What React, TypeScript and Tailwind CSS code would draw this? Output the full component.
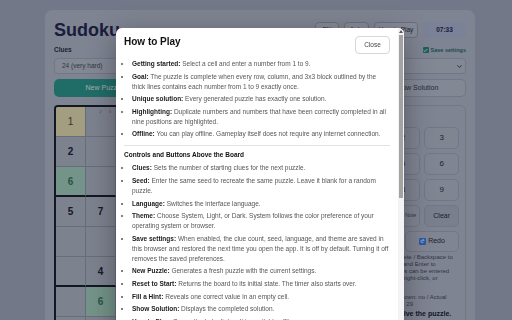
import { ChevronDown, Check } from "lucide-react";

const grid = [
  "1..8..4.9",
  "2...3.6..",
  "6.5..2...",
  "57..6..3.",
  "...4.9.6.",
  ".4.6..2..",
  ".6.2.....",
  "8...1.6..",
  "..6...5.2",
];

const intro = [
  ["Getting started:", "Select a cell and enter a number from 1 to 9."],
  ["Goal:", "The puzzle is complete when every row, column, and 3x3 block outlined by the thick lines contains each number from 1 to 9 exactly once."],
  ["Unique solution:", "Every generated puzzle has exactly one solution."],
  ["Highlighting:", "Duplicate numbers and numbers that have been correctly completed in all nine positions are highlighted."],
  ["Offline:", "You can play offline. Gameplay itself does not require any internet connection."],
];

const controls = [
  ["Clues:", "Sets the number of starting clues for the next puzzle."],
  ["Seed:", "Enter the same seed to recreate the same puzzle. Leave it blank for a random puzzle."],
  ["Language:", "Switches the interface language."],
  ["Theme:", "Choose System, Light, or Dark. System follows the color preference of your operating system or browser."],
  ["Save settings:", "When enabled, the clue count, seed, language, and theme are saved in this browser and restored the next time you open the app. It is off by default. Turning it off removes the saved preferences.", "pr-[1px]"],
  ["New Puzzle:", "Generates a fresh puzzle with the current settings."],
  ["Reset to Start:", "Returns the board to its initial state. The timer also starts over."],
  ["Fill a Hint:", "Reveals one correct value in an empty cell."],
  ["Show Solution:", "Displays the completed solution."],
  ["How to Play:", "Opens the help dialog. It is available offline."],
];

const pad = [
  ["Number buttons:", "Enter a number from 1 to 9 in the selected cell."],
  ["Pencil Note:", "Switches to note mode so you can add small candidate numbers."],
  ["Clear:", "Erases the value or notes in the selected cell."],
  ["Undo / Redo:", "Steps backward or forward through your moves."],
];

function HelpList({ items }: { items: string[][] }) {
  return (
    <ul className="list-disc pl-[8px] space-y-[2.6px] text-[6.5px] leading-[10px] text-[#555]">
      {items.map(([label, text, extra]) => (
        <li key={label} className={extra}>
          <span className="font-bold text-[#1a1a1a]">{label}</span> {text}
        </li>
      ))}
    </ul>
  );
}

function Cell({ r, c }: { r: number; c: number }) {
  const v = grid[r][c];
  const right =
    c === 8 ? "" : c === 2 || c === 5 ? "border-r-2 border-r-[#1c2233]" : "border-r border-r-[#959db2]";
  const bottom =
    r === 8 ? "" : r === 2 || r === 5 ? "border-b-2 border-b-[#1c2233]" : "border-b border-b-[#959db2]";
  const bg = r === 0 && c === 0 ? "bg-[#eae3b8]" : v === "6" ? "bg-[#a6d3c4]" : "bg-[#b3bacd]";
  const color = v === "6" ? "text-[#3a7c62]" : r === 0 && c === 0 ? "text-[#4a4a52] font-normal" : "text-[#1d2438]";
  if (r === 0 && c === 1) {
    return (
      <div className={`h-[30px] ${right} ${bottom} bg-[#b3bacd] grid grid-cols-3 grid-rows-3 text-[4px] leading-[9px] text-center`}>
        <span />
        <span className="text-[#6f7280]">2</span>
        <span className="text-[#d55353]">3</span>
      </div>
    );
  }
  return (
    <div className={`h-[30px] flex items-center justify-center text-[10px] font-bold ${right} ${bottom} ${bg} ${color}`}>
      {v === "." ? "" : v}
    </div>
  );
}

function RedoIcon() {
  return (
    <svg width="7" height="7" viewBox="0 0 16 16">
      <rect width="16" height="16" rx="3" fill="#3b82f6" />
      <path d="M11 5H6.5a2.5 2.5 0 0 0 0 5H10" stroke="white" strokeWidth="1.8" fill="none" />
      <path d="M9 2.5 11.5 5 9 7.5" stroke="white" strokeWidth="1.8" fill="none" />
    </svg>
  );
}

export default function App() {
  return (
    <div className="min-h-screen bg-[#a4adc2] pl-[45px] pt-[10px] font-['Liberation_Sans',Arial,sans-serif]">
      <div className="w-[430px] rounded-[8px] bg-[#b7bed1] px-[9px] pt-[12px] pb-[20px]">
        <header className="flex items-center justify-between">
          <h1 className="text-[18px] leading-[16px] font-bold text-[#242b56]">Sudoku</h1>
          <div className="flex items-center gap-[5px] text-[6.5px] text-[#2f3547]">
            <button className="h-[16px] w-[24px] rounded-[4px] border border-[#98a0b5] bg-[#bfc6d8]">EN</button>
            <button className="h-[16px] w-[25px] rounded-[4px] border border-[#98a0b5] bg-[#bfc6d8]">Auto</button>
            <button className="h-[16px] w-[44px] rounded-[4px] border border-[#98a0b5] bg-[#bfc6d8]">How to Play</button>
            <div className="flex h-[16px] w-[43px] items-center justify-center rounded-[4px] bg-[#b0b9d8] font-semibold text-[#252c55]">
              07:33
            </div>
          </div>
        </header>

        <div className="mt-[8px] grid grid-cols-4 gap-x-[6px] text-[6.5px]">
          {[
            ["Clues", "24 (very hard)"],
            ["Seed", "Random"],
            ["Language", "English"],
          ].map(([label, value]) => (
            <div key={label}>
              <div className="mb-[4px] h-[8px] leading-[8px] font-bold text-[#2a3044]">{label}</div>
              <div className="flex h-[16px] items-center justify-between rounded-[4px] border border-[#a3abbf] bg-[#bcc3d6] px-[7px] text-[#4a5063]">
                {value}
                <ChevronDown size={7} strokeWidth={3} />
              </div>
            </div>
          ))}
          <div>
            <div className="mb-[4px] flex h-[8px] items-center justify-between leading-[8px]">
              <span className="font-bold text-[#2a3044]">Theme</span>
              <span className="flex items-center gap-[2px] text-[5.5px] font-bold text-[#2b6f70]">
                <span className="flex h-[6px] w-[6px] items-center justify-center rounded-[1px] bg-[#2b8a86] text-white">
                  <Check size={5} strokeWidth={4} />
                </span>
                Save settings
              </span>
            </div>
            <div className="flex h-[16px] items-center justify-between rounded-[4px] border border-[#a3abbf] bg-[#bcc3d6] pl-[7px] pr-[2px] text-[#4a5063]">
              System
              <ChevronDown size={7} strokeWidth={3} className="text-[#2a3044]" />
            </div>
          </div>
        </div>

        <div className="mt-[5px] grid grid-cols-4 gap-[4px] text-[7px]">
          <button className="h-[18px] rounded-[5px] bg-[#2f9d96] text-[#e8f2f4]">New Puzzle</button>
          <button className="h-[18px] rounded-[5px] border border-[#a3abbf] bg-[#bcc3d6] text-[#3a4054]">Reset to Start</button>
          <button className="h-[18px] rounded-[5px] border border-[#a3abbf] bg-[#bcc3d6] text-[#3a4054]">Fill a Hint</button>
          <button className="h-[18px] rounded-[5px] border border-[#a3abbf] bg-[#bcc3d6] text-[#3a4054]">Show Solution</button>
        </div>

        <div className="mt-[8px] flex items-start gap-[12px]">
          <div className="grid w-[274px] shrink-0 grid-cols-9 overflow-hidden rounded-tl-[4px] border-2 border-[#1c2233]">
            {grid.map((row, r) => row.split("").map((_, c) => <Cell key={`${r}-${c}`} r={r} c={c} />))}
          </div>

          <div className="flex-1 rounded-[6px] border border-[#a3abbf] p-[6px] text-[#2a3044]">
            <div className="h-[11px] text-[6.5px] font-bold">Number</div>
            <div className="mt-[4px] grid grid-cols-3 gap-[4px] text-[8px]">
              {["1", "2", "3", "4", "5", "6", "7", "8", "9"].map((n) => (
                <button key={n} className="h-[22px] rounded-[5px] border border-[#a3abbf] bg-[#b8bfd2]">
                  {n}
                </button>
              ))}
              <button className="h-[22px] rounded-[5px] border border-[#a3abbf] bg-[#b8bfd2] text-[5.5px] text-[#4a5063]">
                Normal
              </button>
              <button className="h-[22px] rounded-[5px] border border-[#a3abbf] bg-[#b8bfd2] text-[5.2px] text-[#4a5063]">
                Pencil Note
              </button>
              <button className="h-[22px] rounded-[5px] border border-[#a3abbf] bg-[#aeb6cb] text-[7px]">Clear</button>
            </div>
            <div className="mt-[4px] grid grid-cols-2 gap-[4px] text-[7px]">
              <button className="flex h-[21px] items-center justify-center gap-[2px] rounded-[5px] border border-[#a3abbf] bg-[#b8bfd2]">
                Undo
              </button>
              <button className="flex h-[21px] items-center justify-center gap-[2px] rounded-[5px] border border-[#a3abbf] bg-[#b8bfd2]">
                <RedoIcon />
                Redo
              </button>
            </div>
            <p className="mt-[2px] whitespace-nowrap text-[6px] leading-[7px] text-[#474d5e]">
              Use 1–9 to enter. Delete / Backspace to
              <br />
              erase, arrows move, and Enter to
              <br />
              confirm it. Pencil notes can be entered
              <br />
              with the Note button, right-click, or
              <br />
              long press.
            </p>
            <p className="mt-[4.5px] whitespace-nowrap text-[6px] leading-[7px] text-[#474d5e]">
              Hints: 0 / Mistakes shown: no / Actual
              <br />
              clues: 24 / Filled now: 29
            </p>
            <p className="mt-[1px] whitespace-nowrap text-[7px] font-bold leading-[9px] text-[#1d2438]">
              Keep going to solve the puzzle.
            </p>
          </div>
        </div>
      </div>

      <div className="fixed inset-0 bg-black/30" />
      <div
        role="dialog"
        className="fixed left-[116px] top-[28px] flex h-[340px] w-[288px] overflow-hidden rounded-[6px] bg-white shadow-[0_8px_28px_rgba(0,0,0,0.35)]"
      >
        <div className="min-w-0 flex-1 px-[8px] pt-[8px]">
          <div className="flex items-start justify-between">
            <h2 className="text-[10px] font-bold leading-[12px] text-[#111]">How to Play</h2>
            <button className="h-[18px] w-[35px] rounded-[4px] border border-[#d6d6db] text-[6.5px] text-[#444]">
              Close
            </button>
          </div>
          <div className="mt-[5px]">
            <HelpList items={intro} />
          </div>
          <hr className="mt-[6px] mb-[4px] border-[#e3e3e6]" />
          <h3 className="mb-[3px] text-[6.5px] font-bold leading-[10px] text-[#111]">Controls and Buttons Above the Board</h3>
          <HelpList items={controls} />
          <hr className="mt-[6px] mb-[4px] border-[#e3e3e6]" />
          <h3 className="mb-[3px] text-[6.5px] font-bold leading-[10px] text-[#111]">Number Pad and Keyboard</h3>
          <HelpList items={pad} />
        </div>
        <div className="flex w-[6px] flex-col items-center bg-[#f3f3f3] pt-[2px]">
          <div className="h-0 w-0 border-x-[2px] border-b-[3px] border-x-transparent border-b-[#555]" />
          <div className="mt-[2px] h-[163px] w-[4px] bg-[#a3a3a3]" />
        </div>
      </div>
    </div>
  );
}
